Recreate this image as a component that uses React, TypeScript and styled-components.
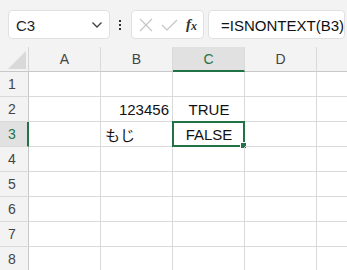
import React from "react";
import styled, { createGlobalStyle } from "styled-components";

const GlobalStyle = createGlobalStyle`
  html, body {
    margin: 0;
    padding: 0;
    background: #ffffff;
    overflow: hidden;
  }
  body {
    font-family: "Noto Sans CJK JP", "Liberation Sans", sans-serif;
  }
`;

const COLS = ["A", "B", "C", "D", ""];
const ROWS = [1, 2, 3, 4, 5, 6, 7, 8];

type CellData = { text: string; align: "left" | "center" | "right" };

const DATA: Record<string, CellData> = {
  B2: { text: "123456", align: "right" },
  C2: { text: "TRUE", align: "center" },
  B3: { text: "もじ", align: "left" },
  C3: { text: "FALSE", align: "center" },
};

const ACTIVE_COL = "C";
const ACTIVE_ROW = 3;

export default function App() {
  return (
    <>
      <GlobalStyle />
      <Page>
        <FormulaBar>
          <NameBox>
            <NameText>C3</NameText>
            <svg width="12" height="8" viewBox="0 0 12 8">
              <path d="M1.5 1.5 L6 6 L10.5 1.5" fill="none" stroke="#444" strokeWidth="1.4" />
            </svg>
          </NameBox>
          <Dots>
            <span />
            <span />
            <span />
          </Dots>
          <ButtonGroup>
            <svg width="14" height="14" viewBox="0 0 14 14">
              <path d="M1 1 L13 13 M13 1 L1 13" stroke="#c4c4c4" strokeWidth="1.2" />
            </svg>
            <svg width="17" height="14" viewBox="0 0 17 14">
              <path d="M1 7 L6 12 L16 2" fill="none" stroke="#c4c4c4" strokeWidth="1.2" />
            </svg>
            <Fx>
              f<sub>x</sub>
            </Fx>
          </ButtonGroup>
          <FormulaInput>=ISNONTEXT(B3)</FormulaInput>
        </FormulaBar>

        <Sheet>
          <Corner>
            <svg width="20" height="20" viewBox="0 0 20 20">
              <path d="M19 1 L19 19 L1 19 Z" fill="#d9d9d9" />
            </svg>
          </Corner>
          {COLS.map((c, i) => (
            <ColHeader key={"h" + i} $active={c === ACTIVE_COL}>
              {c}
            </ColHeader>
          ))}
          {ROWS.map((r) => (
            <React.Fragment key={r}>
              <RowHeader $active={r === ACTIVE_ROW}>{r}</RowHeader>
              {COLS.map((c, i) => {
                const cell = DATA[c + r];
                const selected = c === ACTIVE_COL && r === ACTIVE_ROW;
                return (
                  <Cell key={c + i + r} $align={cell ? cell.align : "left"}>
                    {cell ? cell.text : ""}
                    {selected && (
                      <Selection>
                        <Handle />
                      </Selection>
                    )}
                  </Cell>
                );
              })}
            </React.Fragment>
          ))}
        </Sheet>
      </Page>
    </>
  );
}

const Page = styled.div`
  width: 347px;
  height: 270px;
  overflow: hidden;
  background: #ffffff;
`;

const FormulaBar = styled.div`
  display: flex;
  align-items: center;
  height: 47px;
  box-sizing: border-box;
  padding: 2px 0 0 8px;
  background: #f3f3f3;
`;

const Box = styled.div`
  box-sizing: border-box;
  height: 29px;
  background: #ffffff;
  border: 1px solid #e1e1e1;
  border-radius: 4px;
  display: flex;
  align-items: center;
`;

const NameBox = styled(Box)`
  width: 102px;
  padding: 0 6px 0 7px;
  justify-content: space-between;
`;

const NameText = styled.span`
  font-family: "Liberation Sans", sans-serif;
  font-size: 15px;
  color: #222;
  padding-top: 2px;
`;

const Dots = styled.div`
  width: 22px;
  display: flex;
  flex-direction: column;
  align-items: center;
  gap: 2px;
  span {
    width: 2px;
    height: 2px;
    background: #333;
  }
`;

const ButtonGroup = styled(Box)`
  width: 73px;
  padding: 0 6px 0 7px;
  justify-content: space-between;
`;

const Fx = styled.span`
  font-family: "Liberation Serif", serif;
  font-style: italic;
  font-weight: bold;
  font-size: 15px;
  color: #333;
  sub {
    font-size: 12px;
    vertical-align: -1px;
  }
`;

const FormulaInput = styled(Box)`
  margin-left: 4px;
  flex: 1;
  margin-right: 2px;
  padding-left: 12px;
  font-family: "Liberation Sans", sans-serif;
  font-size: 15px;
  color: #111;
  padding-top: 2px;
`;

const Sheet = styled.div`
  display: grid;
  grid-template-columns: 29px repeat(5, 72px);
  grid-auto-rows: 25px;
`;

const Corner = styled.div`
  box-sizing: border-box;
  background: #f3f3f3;
  border-right: 1px solid #d4d4d4;
  border-bottom: 1px solid #c8c8c8;
  display: flex;
  align-items: flex-end;
  justify-content: flex-end;
  padding: 0 1px 1px 0;
`;

const ColHeader = styled.div<{ $active: boolean }>`
  box-sizing: border-box;
  background: ${(p) => (p.$active ? "#e1e1e1" : "#f3f3f3")};
  border-right: 1px solid #dadada;
  border-bottom: ${(p) => (p.$active ? "2px solid #217346" : "1px solid #c8c8c8")};
  color: ${(p) => (p.$active ? "#217346" : "#444")};
  font-family: "Liberation Sans", sans-serif;
  font-size: 14px;
  display: flex;
  align-items: center;
  justify-content: center;
  padding-top: ${(p) => (p.$active ? "1px" : "0")};
`;

const RowHeader = styled.div<{ $active: boolean }>`
  box-sizing: border-box;
  background: ${(p) => (p.$active ? "#e1e1e1" : "#f3f3f3")};
  border-right: ${(p) => (p.$active ? "2px solid #217346" : "1px solid #c8c8c8")};
  border-bottom: 1px solid #dadada;
  color: ${(p) => (p.$active ? "#217346" : "#444")};
  font-family: "Liberation Sans", sans-serif;
  font-size: 14px;
  display: flex;
  align-items: center;
  padding-left: 8px;
`;

const Cell = styled.div<{ $align: "left" | "center" | "right" }>`
  position: relative;
  box-sizing: border-box;
  border-right: 1px solid #dadada;
  border-bottom: 1px solid #dadada;
  font-family: "Liberation Sans", "Noto Sans CJK JP", sans-serif;
  font-size: 15px;
  color: #111;
  display: flex;
  align-items: center;
  padding: 1px 3px 0 4px;
  justify-content: ${(p) =>
    p.$align === "right" ? "flex-end" : p.$align === "center" ? "center" : "flex-start"};
`;

const Selection = styled.div`
  position: absolute;
  left: -1px;
  top: -1px;
  right: -1px;
  bottom: -1px;
  border: 2px solid #217346;
  pointer-events: none;
`;

const Handle = styled.div`
  position: absolute;
  right: -4px;
  bottom: -4px;
  width: 5px;
  height: 5px;
  background: #217346;
  border: 1px solid #ffffff;
`;
